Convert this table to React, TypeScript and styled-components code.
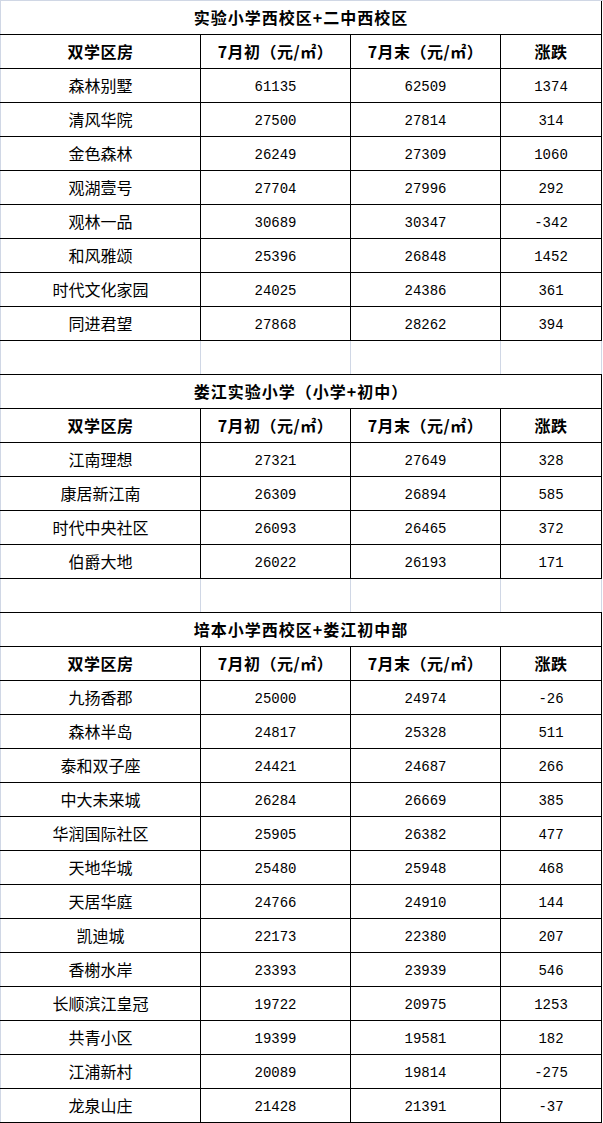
import React from 'react';
import styled, { createGlobalStyle } from 'styled-components';

const GlobalStyle = createGlobalStyle`
  html, body {
    margin: 0;
    padding: 0;
    background: #ffffff;
  }
`;

const GRID = '#d0d7e5';
const CJK = `'Noto Sans CJK SC', 'Noto Sans', sans-serif`;

type Section = {
  title: string;
  rows: [string, number, number, number][];
};

const sections: Section[] = [
  {
    title: '实验小学西校区+二中西校区',
    rows: [
      ['森林别墅', 61135, 62509, 1374],
      ['清风华院', 27500, 27814, 314],
      ['金色森林', 26249, 27309, 1060],
      ['观湖壹号', 27704, 27996, 292],
      ['观林一品', 30689, 30347, -342],
      ['和风雅颂', 25396, 26848, 1452],
      ['时代文化家园', 24025, 24386, 361],
      ['同进君望', 27868, 28262, 394],
    ],
  },
  {
    title: '娄江实验小学（小学+初中）',
    rows: [
      ['江南理想', 27321, 27649, 328],
      ['康居新江南', 26309, 26894, 585],
      ['时代中央社区', 26093, 26465, 372],
      ['伯爵大地', 26022, 26193, 171],
    ],
  },
  {
    title: '培本小学西校区+娄江初中部',
    rows: [
      ['九扬香郡', 25000, 24974, -26],
      ['森林半岛', 24817, 25328, 511],
      ['泰和双子座', 24421, 24687, 266],
      ['中大未来城', 26284, 26669, 385],
      ['华润国际社区', 25905, 26382, 477],
      ['天地华城', 25480, 25948, 468],
      ['天居华庭', 24766, 24910, 144],
      ['凯迪城', 22173, 22380, 207],
      ['香榭水岸', 23393, 23939, 546],
      ['长顺滨江皇冠', 19722, 20975, 1253],
      ['共青小区', 19399, 19581, 182],
      ['江浦新村', 20089, 19814, -275],
      ['龙泉山庄', 21428, 21391, -37],
    ],
  },
];

const Sheet = styled.div`
  width: 603px;
  border-top: 1px solid ${GRID};
  background: #ffffff;
`;

const Row = styled.div<{ $grid?: boolean }>`
  display: grid;
  grid-template-columns: ${(p) => (p.$grid ? '200px 150px 150px 101px' : '601px')};
  width: 602px;
  height: 34px;
  box-sizing: border-box;
  padding-left: 1px;
  border-bottom: 1px solid #000000;
  box-shadow: inset 1px 0 0 ${GRID};
`;

const Cell = styled.div<{ $bold?: boolean; $num?: boolean; $line?: string }>`
  display: flex;
  align-items: center;
  justify-content: center;
  box-sizing: border-box;
  border-right: 1px solid ${(p) => p.$line || '#000000'};
  padding: ${(p) => (p.$num ? '3px 0 0' : '0 0 2px')};
  line-height: 1;
  color: #000000;
  font-family: ${(p) => (p.$num ? `'Liberation Mono', monospace` : CJK)};
  font-size: ${(p) => (p.$num ? '14px' : '16px')};
  font-weight: ${(p) => (p.$bold ? 700 : 400)};
  letter-spacing: ${(p) => (p.$bold ? '0.5px' : '0')};
  white-space: nowrap;
`;

const Title = styled(Cell)`
  font-weight: 700;
  letter-spacing: 1px;
`;

const headers = ['双学区房', '7月初（元/㎡）', '7月末（元/㎡）', '涨跌'];

const SpacerRow = () => (
  <Row $grid>
    <Cell $line={GRID} />
    <Cell $line={GRID} />
    <Cell $line={GRID} />
    <Cell $line={GRID} />
  </Row>
);

const Block = ({ section }: { section: Section }) => (
  <>
    <Row>
      <Title>{section.title}</Title>
    </Row>
    <Row $grid>
      {headers.map((h) => (
        <Cell key={h} $bold>
          {h}
        </Cell>
      ))}
    </Row>
    {section.rows.map(([name, start, end, diff]) => (
      <Row $grid key={name}>
        <Cell>{name}</Cell>
        <Cell $num>{start}</Cell>
        <Cell $num>{end}</Cell>
        <Cell $num>{diff}</Cell>
      </Row>
    ))}
  </>
);

export default function App() {
  return (
    <>
      <GlobalStyle />
      <Sheet>
        {sections.map((s, i) => (
          <React.Fragment key={s.title}>
            {i > 0 && <SpacerRow />}
            <Block section={s} />
          </React.Fragment>
        ))}
      </Sheet>
    </>
  );
}
